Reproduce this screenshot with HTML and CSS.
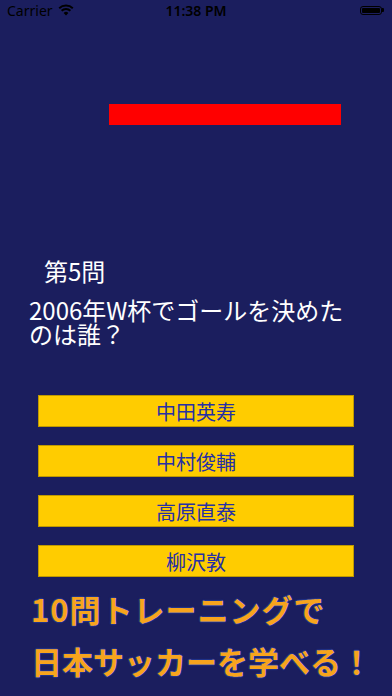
FILE: index.html
```html
<!DOCTYPE html>
<html>
<head>
	<meta charset="utf-8">
	<title>サッカークイズ</title>
	<link rel="stylesheet" href="styles.css">
</head>
<body>

	<div class="screen">
		<div class="status-bar">
			<div class="carrier">
				Carrier
				<svg class="wifi" width="16" height="12" viewBox="0 0 16 12">
					<path d="M8 11.5 L5.6 8.9 A3.5 3.5 0 0 1 10.4 8.9 Z" fill="#000"/>
					<path d="M3.6 6.8 A6.3 6.3 0 0 1 12.4 6.8" stroke="#000" stroke-width="1.9" fill="none"/>
					<path d="M1.2 4.3 A9.8 9.8 0 0 1 14.8 4.3" stroke="#000" stroke-width="1.9" fill="none"/>
				</svg>
			</div>
			<div class="time">11:38 PM</div>
			<div class="battery-wrap">
				<div class="battery"><div class="battery-level"></div></div>
				<div class="battery-tip"></div>
			</div>
		</div>

		<div class="progress"></div>

		<div class="quiz-number">第5問</div>
		<div class="question">2006年W杯でゴールを決めたのは誰？</div>

		<div class="choices">
			<button class="choice">中田英寿</button>
			<button class="choice">中村俊輔</button>
			<button class="choice">高原直泰</button>
			<button class="choice">柳沢敦</button>
		</div>

		<div class="slogan">
			<div class="slogan-first">10問トレーニングで</div>
			<div>日本サッカーを学べる！</div>
		</div>
	</div>

</body>
</html>
```

FILE: styles.css
```css
body {
	margin: 0;
	background-color: #1b1e5e;
	font-family: "Noto Sans CJK JP", sans-serif;
}

.screen {
	height: 696px;
	overflow: hidden;
}

/* status bar */
.status-bar {
	display: grid;
	grid-template-columns: 1fr auto 1fr;
	align-items: center;
	height: 20px;
	padding: 0 7px;
	color: #000000;
	font-family: "Noto Sans", sans-serif;
	font-size: 14px;
}

.carrier {
	display: flex;
	align-items: center;
	gap: 5px;
}

.time {
	font-weight: 600;
}

.battery-wrap {
	display: flex;
	align-items: center;
	justify-content: flex-end;
	margin-right: 1px;
}

.battery {
	width: 22px;
	height: 9px;
	border: 1px solid #000000;
	border-radius: 3px;
	padding: 1px;
	box-sizing: border-box;
}

.battery-level {
	width: 100%;
	height: 100%;
	background-color: #000000;
	border-radius: 1px;
}

.battery-tip {
	width: 2px;
	height: 4px;
	background-color: #000000;
	border-radius: 0 1px 1px 0;
}

/* quiz */
.progress {
	width: 232px;
	height: 21px;
	margin: 84px 0 0 109px;
	background-color: #ff0000;
}

.quiz-number {
	margin: 132px 0 0 44px;
	color: #FFFFFF;
	font-size: 24px;
	line-height: 28px;
}

.question {
	margin: 13px 40px 0 29px;
	color: #FFFFFF;
	font-size: 24px;
	line-height: 24px;
}

.choices {
	display: flex;
	flex-direction: column;
	gap: 18px;
	margin-top: 49px;
	padding: 0 38px;
}

.choice {
	height: 32px;
	background-color: #ffcc00;
	border: 1px solid rgba(0, 0, 0, 0.25);
	border-radius: 0;
	color: #2630a6;
	font-family: "Noto Sans CJK JP", sans-serif;
	font-size: 20px;
	padding: 0;
}

.slogan {
	margin-top: 6px;
	padding-left: 31px;
	color: #f7a41d;
	font-size: 31px;
	font-weight: bold;
	line-height: 52px;
	white-space: nowrap;
	text-shadow: 0 0 1px #2f55c8, 0 0 1px #2f55c8, 0 0 2px #2f55c8;
}

.slogan-first {
	letter-spacing: 1px;
}
```
